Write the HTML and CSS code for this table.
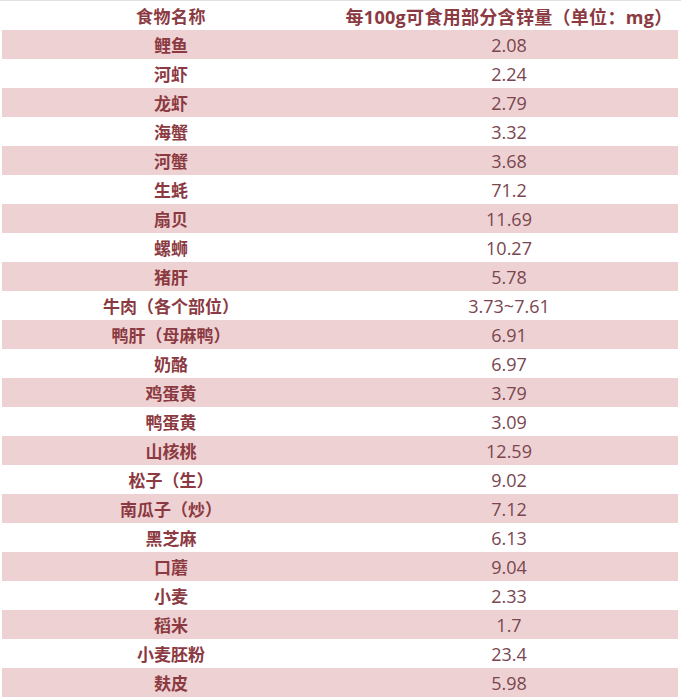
FILE: index.html
```html
<!DOCTYPE html>
<html lang="zh">
<head>
<meta charset="utf-8">
<link rel="stylesheet" href="styles.css">
</head>
<body>
<div class="wrap">
<table class="zinc">
<thead>
<tr><th class="c1">食物名称</th><th class="c2">每100g可食用部分含锌量（单位：mg）</th></tr>
</thead>
<tbody>
<tr><td class="name">鲤鱼</td><td class="num">2.08</td></tr>
<tr><td class="name">河虾</td><td class="num">2.24</td></tr>
<tr><td class="name">龙虾</td><td class="num">2.79</td></tr>
<tr><td class="name">海蟹</td><td class="num">3.32</td></tr>
<tr><td class="name">河蟹</td><td class="num">3.68</td></tr>
<tr><td class="name">生蚝</td><td class="num">71.2</td></tr>
<tr><td class="name">扇贝</td><td class="num">11.69</td></tr>
<tr><td class="name">螺蛳</td><td class="num">10.27</td></tr>
<tr><td class="name">猪肝</td><td class="num">5.78</td></tr>
<tr><td class="name">牛肉（各个部位）</td><td class="num">3.73~7.61</td></tr>
<tr><td class="name">鸭肝（母麻鸭）</td><td class="num">6.91</td></tr>
<tr><td class="name">奶酪</td><td class="num">6.97</td></tr>
<tr><td class="name">鸡蛋黄</td><td class="num">3.79</td></tr>
<tr><td class="name">鸭蛋黄</td><td class="num">3.09</td></tr>
<tr><td class="name">山核桃</td><td class="num">12.59</td></tr>
<tr><td class="name">松子（生）</td><td class="num">9.02</td></tr>
<tr><td class="name">南瓜子（炒）</td><td class="num">7.12</td></tr>
<tr><td class="name">黑芝麻</td><td class="num">6.13</td></tr>
<tr><td class="name">口蘑</td><td class="num">9.04</td></tr>
<tr><td class="name">小麦</td><td class="num">2.33</td></tr>
<tr><td class="name">稻米</td><td class="num">1.7</td></tr>
<tr><td class="name">小麦胚粉</td><td class="num">23.4</td></tr>
<tr><td class="name">麸皮</td><td class="num">5.98</td></tr>
</tbody>
</table>
</div>
</body>
</html>
```

FILE: styles.css
```css
html, body {
  margin: 0;
  padding: 0;
  background: #ffffff;
}
.wrap {
  border-top: 1px solid #e2e2e2;
  padding: 0 3px 0 2px;
}
.zinc {
  width: 676px;
  border-collapse: collapse;
  table-layout: fixed;
  font-family: "Open Sans", "Noto Sans CJK SC", sans-serif;
}
.zinc th, .zinc td {
  padding: 0;
  text-align: center;
  vertical-align: middle;
  white-space: nowrap;
}
.zinc th {
  height: 29px;
  font-family: "Noto Sans CJK SC", sans-serif;
  font-weight: 700;
  font-size: 17px;
  letter-spacing: 0.5px;
  color: #8c3a42;
}
.zinc .c1 { width: 338px; }
.zinc .c2 { width: 338px; }
.zinc th.c2 {
  font-family: "Open Sans", "Noto Sans CJK SC", sans-serif;
  font-size: 18px;
  letter-spacing: 0.3px;
}
.zinc td {
  height: 29px;
}
.zinc tbody tr:nth-child(odd) {
  background: #eed2d3;
}
.name {
  font-family: "Noto Sans CJK SC", sans-serif;
  font-weight: 700;
  font-size: 17px;
  color: #8c3a42;
}
.num {
  font-size: 18px;
  color: #7a4650;
}
```
